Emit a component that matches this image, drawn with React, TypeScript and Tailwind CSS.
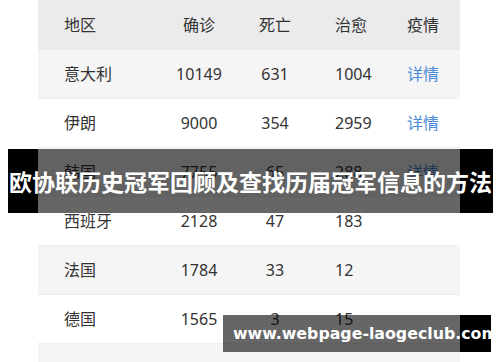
import React from "react";

const rows = [
  { r: "意大利", c: "10149", d: "631", h: "1004", link: true },
  { r: "伊朗", c: "9000", d: "354", h: "2959", link: true },
  { r: "韩国", c: "7755", d: "65", h: "288", link: true },
  { r: "西班牙", c: "2128", d: "47", h: "183", link: false },
  { r: "法国", c: "1784", d: "33", h: "12", link: false },
  { r: "德国", c: "1565", d: "3", h: "15", link: false },
  { r: "美国", c: "1329", d: "38", h: "8", link: false },
];

const font = { fontFamily: '"Noto Sans", "Noto Sans CJK SC", sans-serif' };

export default function App() {
  return (
    <div className="relative w-[500px] h-[362px] overflow-hidden bg-white" style={font}>
      <div className="ml-[38px] w-[422px] text-[16px] text-[#333]">
        <div className="grid grid-cols-[112px_98px_54px_93px_56px_1fr] h-[50px] items-center bg-[#ebebeb]">
          <div className="pl-[26px]">地区</div>
          <div className="text-center">确诊</div>
          <div className="text-center">死亡</div>
          <div className="pl-[33px]">治愈</div>
          <div className="text-center">疫情</div>
          <div />
        </div>
        {rows.map((row, i) => (
          <div
            key={i}
            className={
              "grid grid-cols-[112px_98px_54px_93px_56px_1fr] h-[49px] items-center border-b border-[#eeeeee] " +
              (i === 6 ? "pt-[8px] " : "") +
              (i % 2 === 0 ? "bg-[#f5f5f5]" : "bg-white")
            }
          >
            <div className="pl-[26px]">{row.r}</div>
            <div className="text-center">{row.c}</div>
            <div className="text-center">{row.d}</div>
            <div className="pl-[33px]">{row.h}</div>
            <div className="text-center text-[#4a8ad8]">{row.link ? "详情" : ""}</div>
            <div />
          </div>
        ))}
      </div>

      <div className="absolute left-[8px] top-[149px] w-[485px] h-[64px] flex">
        <div className="w-[30px] bg-black" />
        <div className="w-[422px] bg-black/60" />
        <div className="flex-1 bg-black" />
        <div
          className="absolute inset-0 flex items-center justify-center text-white font-bold text-[23px] whitespace-nowrap"
          style={{ fontFamily: '"Noto Sans CJK SC", sans-serif' }}
        >
          欧协联历史冠军回顾及查找历届冠军信息的方法
        </div>
      </div>

      <div className="absolute left-[223px] top-[315px] w-[268px] h-[37px] flex">
        <div className="w-[237px] bg-black/60" />
        <div className="flex-1 bg-black" />
        <div
          className="absolute inset-0 flex items-center pl-[10px] text-white font-bold text-[15.8px] whitespace-nowrap"
          style={{ fontFamily: '"DejaVu Sans", sans-serif' }}
        >
          www.webpage-laogeclub.com
        </div>
      </div>
    </div>
  );
}
